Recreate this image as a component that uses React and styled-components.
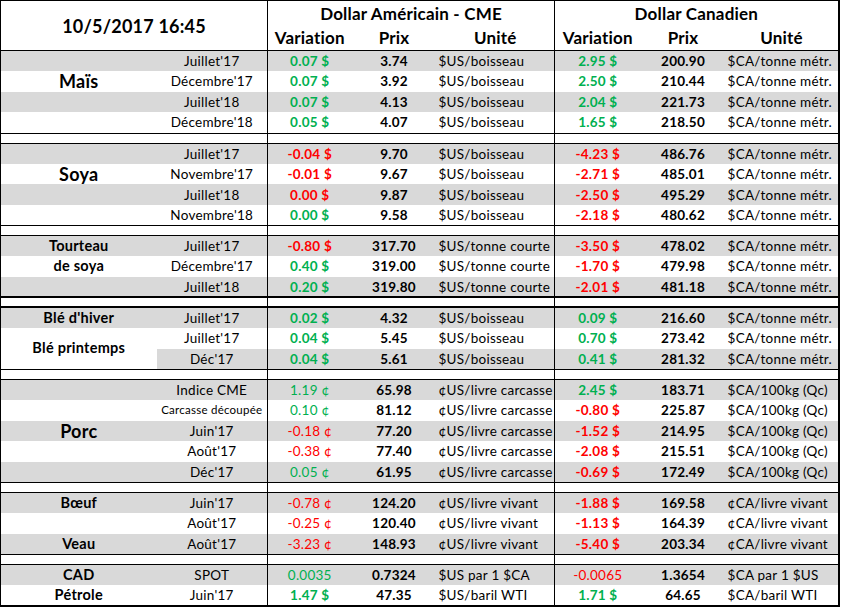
import React from 'react';
import styled, { createGlobalStyle, css } from 'styled-components';

const GlobalStyle = createGlobalStyle`
  html, body { margin: 0; padding: 0; background: #ffffff; }
  body { font-family: Lato, "Open Sans", "Liberation Sans", sans-serif; color: #000; }
`;

const GREEN = '#00B050';
const RED = '#FF0000';
const SHADE = '#D9D9D9';

const Sheet = styled.table`
  border-collapse: collapse;
  table-layout: fixed;
  width: 839px;
  font-size: 13.5px;
  letter-spacing: 0.25px;
  border-top: 1px solid #000;
  border-left: 1px solid #000;
  border-right: 2px solid #000;
  border-bottom: 2px solid #000;
`;

const HeadRow = styled.tr`
  height: 25px;
`;

const HeadCell = styled.th`
  padding: 0;
  font-weight: 700;
  font-size: ${(p) => (p.$large ? '18px' : '17px')};
  letter-spacing: 0.2px;
  text-align: center;
  vertical-align: middle;
  white-space: nowrap;
  border-bottom: ${(p) => (p.$bottom ? '1px solid #000' : 'none')};
  border-right: ${(p) => (p.$divider ? `${p.$divider}px solid #000` : 'none')};
`;

const Row = styled.tr`
  height: 20.625px;
  background: ${(p) => (p.$shade ? SHADE : '#ffffff')};
`;

const cellBase = css`
  padding: 0;
  white-space: nowrap;
  overflow: visible;
  vertical-align: middle;
  line-height: 16px;
`;

const LabelCell = styled.td`
  ${cellBase};
  text-align: center;
  font-weight: 700;
  font-size: ${(p) => (p.$big ? '18px' : '14.5px')};
  background: ${(p) => (p.$plain ? '#ffffff' : 'inherit')};
`;

const MonthCell = styled.td`
  ${cellBase};
  text-align: center;
  font-size: ${(p) => (p.$small ? '11.5px' : '13.5px')};
  border-right: 1px solid #000;
`;

const VarCell = styled.td`
  ${cellBase};
  text-align: center;
  font-weight: ${(p) => (p.$bold ? 700 : 400)};
  color: ${(p) => (p.$tone === 'g' ? GREEN : RED)};
`;

const PriceCell = styled.td`
  ${cellBase};
  text-align: center;
  font-weight: 700;
`;

const UnitCell = styled.td`
  ${cellBase};
  text-align: left;
  padding-left: 2px;
  border-right: ${(p) => p.$divider}px solid #000;
`;

const SpacerRow = styled.tr`
  height: 10px;
`;

const SpacerCell = styled.td`
  padding: 0;
  border-top: ${(p) => (p.$thick ? 2 : 1)}px solid #000;
  border-bottom: ${(p) => (p.$thick ? 2 : 1)}px solid #000;
  border-right: ${(p) => p.$divider}px solid #000;
`;

const US_B = '$US/boisseau';
const US_T = '$US/tonne courte';
const US_LC = '¢US/livre carcasse';
const US_LV = '¢US/livre vivant';
const CA_T = '$CA/tonne métr.';
const CA_K = '$CA/100kg (Qc)';
const CA_LV = '¢CA/livre vivant';

const r = (month, uv, ut, up, uu, cv, ct, cp, cu, extra = {}) => ({
  month, uv, ut, up, uu, cv, ct, cp, cu, ...extra,
});

const SECTIONS = [
  {
    rows: [
      r("Juillet'17", '0.07 $', 'g', '3.74', US_B, '2.95 $', 'g', '200.90', CA_T),
      r("Décembre'17", '0.07 $', 'g', '3.92', US_B, '2.50 $', 'g', '210.44', CA_T, { label: 'Maïs', big: true }),
      r("Juillet'18", '0.07 $', 'g', '4.13', US_B, '2.04 $', 'g', '221.73', CA_T),
      r("Décembre'18", '0.05 $', 'g', '4.07', US_B, '1.65 $', 'g', '218.50', CA_T),
    ],
  },
  {
    rows: [
      r("Juillet'17", '-0.04 $', 'r', '9.70', US_B, '-4.23 $', 'r', '486.76', CA_T),
      r("Novembre'17", '-0.01 $', 'r', '9.67', US_B, '-2.71 $', 'r', '485.01', CA_T, { label: 'Soya', big: true }),
      r("Juillet'18", '0.00 $', 'r', '9.87', US_B, '-2.50 $', 'r', '495.29', CA_T),
      r("Novembre'18", '0.00 $', 'g', '9.58', US_B, '-2.18 $', 'r', '480.62', CA_T),
    ],
  },
  {
    thickAfter: true,
    rows: [
      r("Juillet'17", '-0.80 $', 'r', '317.70', US_T, '-3.50 $', 'r', '478.02', CA_T, { label: 'Tourteau' }),
      r("Décembre'17", '0.40 $', 'g', '319.00', US_T, '-1.70 $', 'r', '479.98', CA_T, { label: 'de soya' }),
      r("Juillet'18", '0.20 $', 'g', '319.80', US_T, '-2.01 $', 'r', '481.18', CA_T),
    ],
  },
  {
    rows: [
      r("Juillet'17", '0.02 $', 'g', '4.32', US_B, '0.09 $', 'g', '216.60', CA_T, { label: "Blé d'hiver" }),
      r("Juillet'17", '0.04 $', 'g', '5.45', US_B, '0.70 $', 'g', '273.42', CA_T, { label: 'Blé printemps', span: 2, plain: true }),
      r("Déc'17", '0.04 $', 'g', '5.61', US_B, '0.41 $', 'g', '281.32', CA_T, { covered: true }),
    ],
  },
  {
    rows: [
      r('Indice CME', '1.19 ¢', 'g', '65.98', US_LC, '2.45 $', 'g', '183.71', CA_K),
      r('Carcasse découpée', '0.10 ¢', 'g', '81.12', US_LC, '-0.80 $', 'r', '225.87', CA_K, { small: true }),
      r("Juin'17", '-0.18 ¢', 'r', '77.20', US_LC, '-1.52 $', 'r', '214.95', CA_K, { label: 'Porc', big: true }),
      r("Août'17", '-0.38 ¢', 'r', '77.40', US_LC, '-2.08 $', 'r', '215.51', CA_K),
      r("Déc'17", '0.05 ¢', 'g', '61.95', US_LC, '-0.69 $', 'r', '172.49', CA_K),
    ],
  },
  {
    rows: [
      r("Juin'17", '-0.78 ¢', 'r', '124.20', US_LV, '-1.88 $', 'r', '169.58', CA_LV, { label: 'Bœuf' }),
      r("Août'17", '-0.25 ¢', 'r', '120.40', US_LV, '-1.13 $', 'r', '164.39', CA_LV),
      r("Août'17", '-3.23 ¢', 'r', '148.93', US_LV, '-5.40 $', 'r', '203.34', CA_LV, { label: 'Veau' }),
    ],
  },
  {
    rows: [
      r('SPOT', '0.0035', 'g', '0.7324', '$US par 1 $CA', '-0.0065', 'r', '1.3654', '$CA par 1 $US', { label: 'CAD' }),
      r("Juin'17", '1.47 $', 'g', '47.35', '$US/baril WTI', '1.71 $', 'g', '64.65', '$CA/baril WTI', { label: 'Pétrole' }),
    ],
  },
];

const isBold = (v) => v.includes('$');

function DataRow({ row, shade }) {
  return (
    <Row $shade={shade}>
      {!row.covered && (
        <LabelCell $big={row.big} $plain={row.plain} rowSpan={row.span || 1}>
          {row.label || ''}
        </LabelCell>
      )}
      <MonthCell $small={row.small}>{row.month}</MonthCell>
      <VarCell $tone={row.ut} $bold={isBold(row.uv)}>{row.uv}</VarCell>
      <PriceCell>{row.up}</PriceCell>
      <UnitCell $divider={1}>{row.uu}</UnitCell>
      <VarCell $tone={row.ct} $bold={isBold(row.cv)}>{row.cv}</VarCell>
      <PriceCell>{row.cp}</PriceCell>
      <UnitCell $divider={2}>{row.cu}</UnitCell>
    </Row>
  );
}

function Spacer({ thick }) {
  return (
    <SpacerRow>
      <SpacerCell colSpan={2} $thick={thick} $divider={1} />
      <SpacerCell colSpan={3} $thick={thick} $divider={1} />
      <SpacerCell colSpan={3} $thick={thick} $divider={2} />
    </SpacerRow>
  );
}

export default function App() {
  return (
    <>
      <GlobalStyle />
      <Sheet>
        <colgroup>
          <col style={{ width: 156 }} />
          <col style={{ width: 111 }} />
          <col style={{ width: 84 }} />
          <col style={{ width: 85 }} />
          <col style={{ width: 118 }} />
          <col style={{ width: 86 }} />
          <col style={{ width: 85 }} />
          <col style={{ width: 113 }} />
        </colgroup>
        <thead>
          <HeadRow>
            <HeadCell colSpan={2} rowSpan={2} $large $bottom $divider={1}>
              10/5/2017 16:45
            </HeadCell>
            <HeadCell colSpan={3} $divider={1}>Dollar Américain - CME</HeadCell>
            <HeadCell colSpan={3} $divider={2}>Dollar Canadien</HeadCell>
          </HeadRow>
          <HeadRow>
            <HeadCell $bottom>Variation</HeadCell>
            <HeadCell $bottom>Prix</HeadCell>
            <HeadCell $bottom $divider={1}>Unité</HeadCell>
            <HeadCell $bottom>Variation</HeadCell>
            <HeadCell $bottom>Prix</HeadCell>
            <HeadCell $bottom $divider={2}>Unité</HeadCell>
          </HeadRow>
        </thead>
        <tbody>
          {SECTIONS.map((section, si) => (
            <React.Fragment key={si}>
              {si > 0 && <Spacer thick={SECTIONS[si - 1].thickAfter} />}
              {section.rows.map((row, ri) => (
                <DataRow key={ri} row={row} shade={ri % 2 === 0} />
              ))}
            </React.Fragment>
          ))}
        </tbody>
      </Sheet>
    </>
  );
}
